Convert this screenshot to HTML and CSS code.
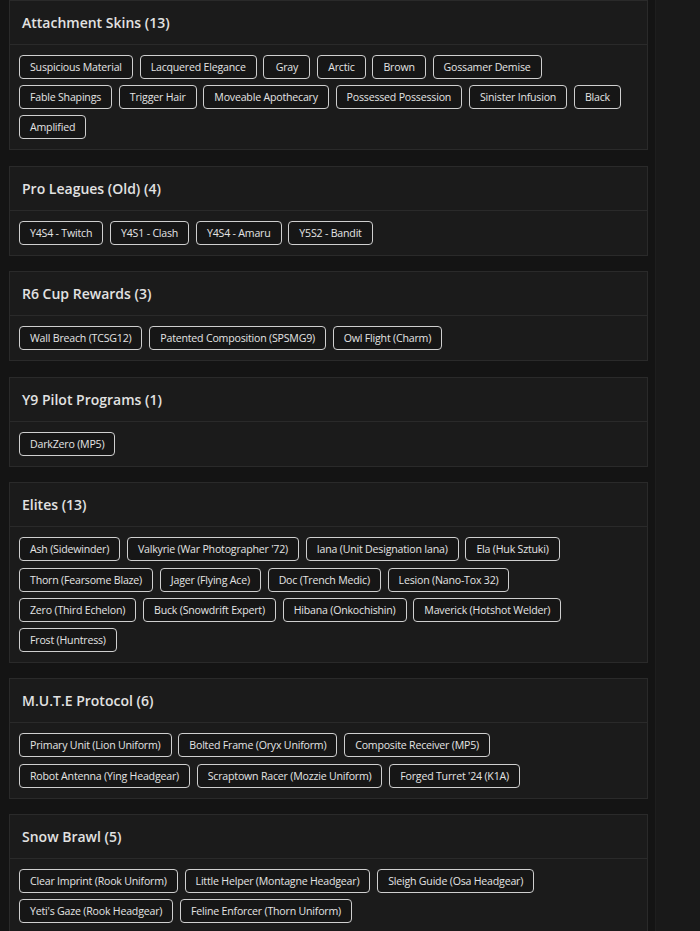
FILE: index.html
```html
<!DOCTYPE html>
<html>
<head>
<meta charset="utf-8">
<link rel="stylesheet" href="styles.css">
</head>
<body>
<div class="page">
  <main class="content">
    <section class="card">
      <header class="card-head"><h2>Attachment Skins (13)</h2></header>
      <div class="tags">
        <span class="tag">Suspicious Material</span>
        <span class="tag">Lacquered Elegance</span>
        <span class="tag">Gray</span>
        <span class="tag">Arctic</span>
        <span class="tag">Brown</span>
        <span class="tag">Gossamer Demise</span>
        <span class="tag">Fable Shapings</span>
        <span class="tag">Trigger Hair</span>
        <span class="tag">Moveable Apothecary</span>
        <span class="tag">Possessed Possession</span>
        <span class="tag">Sinister Infusion</span>
        <span class="tag">Black</span>
        <span class="tag">Amplified</span>
      </div>
    </section>
    <section class="card">
      <header class="card-head"><h2>Pro Leagues (Old) (4)</h2></header>
      <div class="tags">
        <span class="tag">Y4S4 - Twitch</span>
        <span class="tag">Y4S1 - Clash</span>
        <span class="tag">Y4S4 - Amaru</span>
        <span class="tag">Y5S2 - Bandit</span>
      </div>
    </section>
    <section class="card">
      <header class="card-head"><h2>R6 Cup Rewards (3)</h2></header>
      <div class="tags">
        <span class="tag">Wall Breach (TCSG12)</span>
        <span class="tag">Patented Composition (SPSMG9)</span>
        <span class="tag">Owl Flight (Charm)</span>
      </div>
    </section>
    <section class="card">
      <header class="card-head"><h2>Y9 Pilot Programs (1)</h2></header>
      <div class="tags">
        <span class="tag">DarkZero (MP5)</span>
      </div>
    </section>
    <section class="card">
      <header class="card-head"><h2>Elites (13)</h2></header>
      <div class="tags">
        <span class="tag">Ash (Sidewinder)</span>
        <span class="tag">Valkyrie (War Photographer '72)</span>
        <span class="tag">Iana (Unit Designation Iana)</span>
        <span class="tag">Ela (Huk Sztuki)</span>
        <span class="tag">Thorn (Fearsome Blaze)</span>
        <span class="tag">Jager (Flying Ace)</span>
        <span class="tag">Doc (Trench Medic)</span>
        <span class="tag">Lesion (Nano-Tox 32)</span>
        <span class="tag">Zero (Third Echelon)</span>
        <span class="tag">Buck (Snowdrift Expert)</span>
        <span class="tag">Hibana (Onkochishin)</span>
        <span class="tag">Maverick (Hotshot Welder)</span>
        <span class="tag">Frost (Huntress)</span>
      </div>
    </section>
    <section class="card">
      <header class="card-head"><h2>M.U.T.E Protocol (6)</h2></header>
      <div class="tags">
        <span class="tag">Primary Unit (Lion Uniform)</span>
        <span class="tag">Bolted Frame (Oryx Uniform)</span>
        <span class="tag">Composite Receiver (MP5)</span>
        <span class="tag">Robot Antenna (Ying Headgear)</span>
        <span class="tag">Scraptown Racer (Mozzie Uniform)</span>
        <span class="tag">Forged Turret '24 (K1A)</span>
      </div>
    </section>
    <section class="card">
      <header class="card-head"><h2>Snow Brawl (5)</h2></header>
      <div class="tags">
        <span class="tag">Clear Imprint (Rook Uniform)</span>
        <span class="tag">Little Helper (Montagne Headgear)</span>
        <span class="tag">Sleigh Guide (Osa Headgear)</span>
        <span class="tag">Yeti's Gaze (Rook Headgear)</span>
        <span class="tag">Feline Enforcer (Thorn Uniform)</span>
      </div>
    </section>
  </main>
  <aside class="side"></aside>
</div>
</body>
</html>
```
FILE: styles.css
```css
* { box-sizing: border-box; }
html, body { margin: 0; padding: 0; }
body {
  background: #141414;
  color: #e2e2e2;
  font-family: "Open Sans", "Liberation Sans", sans-serif;
  height: 931px;
  overflow: hidden;
}
.page {
  display: flex;
  height: 931px;
}
.content {
  width: 656px;
  padding: 0 7px 0 9px;
  display: flex;
  flex-direction: column;
  gap: 15.5px;
  border-right: 1px solid #1e1e1e;
}
.side {
  flex: 1;
  background: #191919;
}
.card {
  background: #1b1b1b;
  border: 1px solid #2a2a2a;
}
.card-head {
  height: 44px;
  display: flex;
  align-items: center;
  padding: 0 12px;
  border-bottom: 1px solid #2a2a2a;
}
.card-head h2 {
  margin: 0;
  font-size: 14px;
  font-weight: 600;
  color: #e2e2e2;
}
.tags {
  display: flex;
  flex-wrap: wrap;
  gap: 6.2px 6.8px;
  padding: 10px 22px 10px 9px;
}
.tag {
  height: 24px;
  min-width: 47px;
  display: inline-flex;
  align-items: center;
  justify-content: center;
  padding: 0 10px;
  border: 1px solid #cfcfcf;
  border-radius: 4px;
  background: #161616;
  font-size: 10.6px;
  letter-spacing: -0.2px;
  color: #e4e4e4;
  white-space: nowrap;
}
```
